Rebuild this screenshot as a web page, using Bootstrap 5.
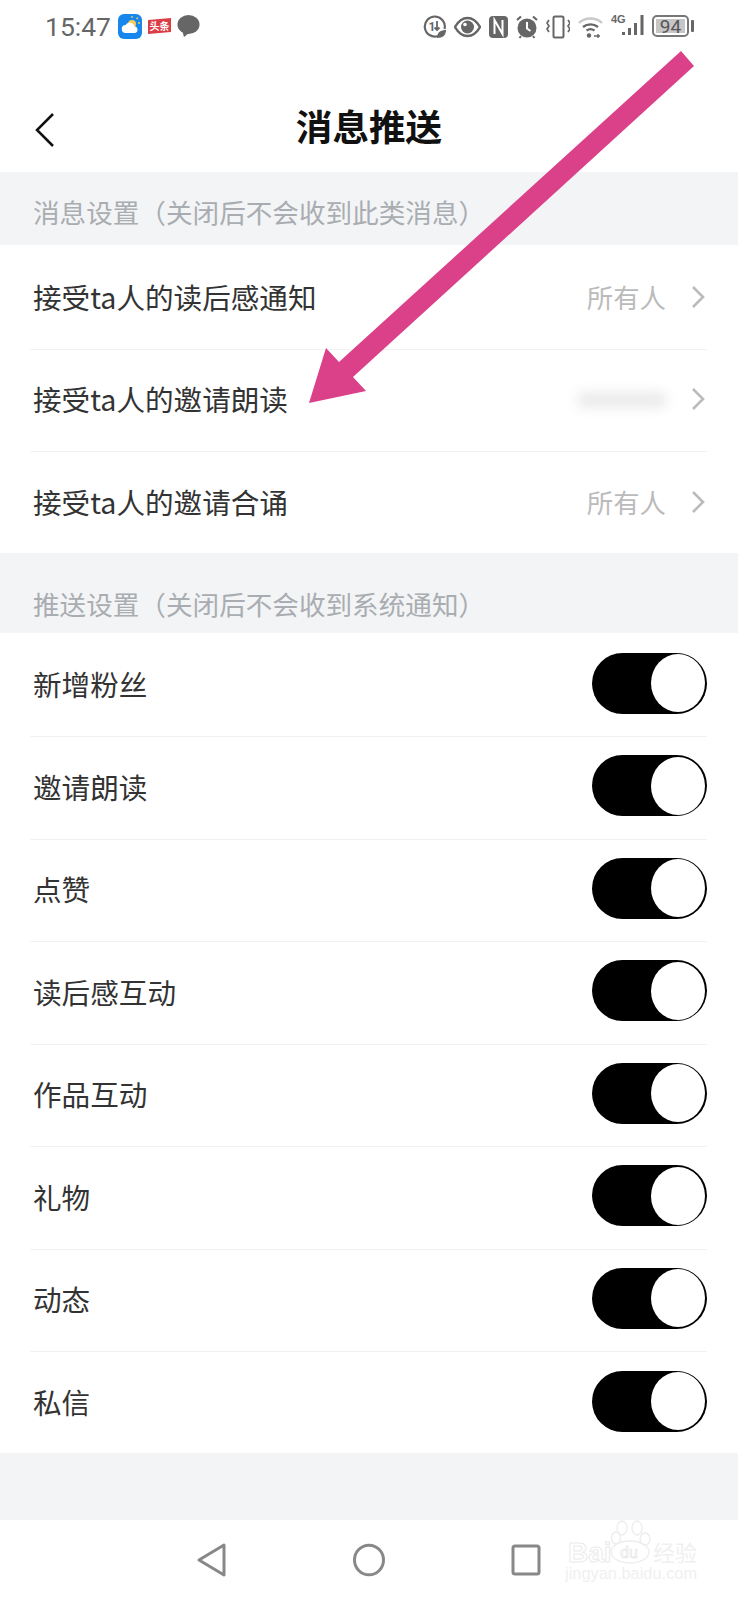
<!DOCTYPE html>
<html lang="zh-CN">
<head>
  <meta charset="UTF-8">
  <meta name="viewport" content="width=device-width, initial-scale=1.0">
  <title>消息推送</title>
  <link href="https://cdn.jsdelivr.net/npm/bootstrap@5.3.0/dist/css/bootstrap.min.css" rel="stylesheet">
  <style>
    body {
      background-color: #fff;
      font-family: "Noto Sans CJK SC", "Noto Sans", sans-serif;
      color: #333;
    }
    .phone-page {
      width: 738px;
      height: 1600px;
      background-color: #f3f4f6;
      overflow: hidden;
    }
    .status-bar {
      height: 55px;
      padding: 14px 44px 0 45px;
      background-color: #fff;
    }
    .status-time {
      font-family: Roboto, sans-serif;
      font-size: 26.5px;
      line-height: 26px;
      color: #666;
      width: 68px;
    }
    .status-left { gap: 5px; }
    .status-right { gap: 8px; margin-top: 1px; }
    .signal-icon { margin-top: -5px; }
    .title-bar {
      height: 117px;
      background-color: #fff;
      padding-top: 26px;
    }
    .title-text {
      font-size: 36.6px;
      font-weight: 700;
      color: #111;
      line-height: 1;
      margin: 0;
    }
    .title-back {
      left: 34px;
      top: 57px;
    }
    .group-label {
      font-size: 26.6px;
      color: #a9adb1;
      padding-left: 33px;
    }
    .label-one { height: 73px; padding-top: 6px; }
    .label-two { height: 80px; padding-top: 23px; }
    .setting-list { background-color: #fff; padding-top: 2px; }
    .setting-row {
      height: 102.5px;
      margin: 0 31px 0 30px;
      padding: 0 3px 4px;
      font-size: 28.6px;
      color: #333;
      border-bottom: 1px solid #f1f2f4;
    }
    .setting-row:last-child {
      height: 100.5px;
      padding-bottom: 2.5px;
      border-bottom: 0;
    }
    .row-name { margin-top: 3px; }
    .row-value { margin-top: 2px; }
    .value-text {
      font-size: 26.4px;
      color: #bbb;
      margin-right: 25px;
    }
    .value-blur {
      width: 88px;
      height: 16px;
      margin-top: 2px;
      margin-right: 25px;
      background-color: #ebebeb;
      filter: blur(6px);
    }
    .chevron-right { margin-right: -1px; }
    .push-toggle {
      width: 115px;
      height: 61px;
      background-color: #000;
      padding-right: 2px;
      margin-right: -3px;
    }
    .toggle-knob {
      width: 54px;
      height: 58px;
      background-color: #fff;
      border-radius: 50%;
    }
    .nav-bar {
      height: 80px;
      background-color: #fff;
      padding-left: 196px;
      gap: 125px;
    }
    .baidu-mark { left: 565px; top: 0; }
    .pink-arrow { left: 0; top: 0; }
  </style>
</head>
<body>
  <div class="phone-page position-relative d-flex flex-column">
    <div class="status-bar d-flex justify-content-between align-items-start">
      <div class="status-left d-flex align-items-start">
        <span class="status-time">15:47</span>
        <svg width="24" height="25" viewBox="0 0 24 25">
          <rect width="24" height="25" rx="6" fill="#1787ee"/>
          <circle cx="14" cy="10" r="4" fill="#f5cf58"/>
          <path d="M14 4v-2M20 9h2M18.500 5l1.500-1.500" stroke="#f5cf58" stroke-width="1.300"/>
          <path d="M8 19a4 4 0 0 1-.5-8 5 5 0 0 1 9 1.500 3.300 3.300 0 0 1 .5 6.500z" fill="#fff"/>
        </svg>
        <svg width="25" height="25" viewBox="0 0 25 25">
          <path d="M1 6 24 4 24 18 1 20z" fill="#dc3c44"/>
          <text x="12.500" y="16" text-anchor="middle" font-size="10" font-weight="700" fill="#fff" font-family="Noto Sans CJK SC">头条</text>
        </svg>
        <svg width="23" height="24" viewBox="0 0 23 24">
          <ellipse cx="11.500" cy="10.500" rx="11" ry="9.500" fill="#666"/>
          <path d="M5 16 7 23 12 19z" fill="#666"/>
        </svg>
      </div>
      <div class="status-right d-flex align-items-start">
        <svg width="23" height="24" viewBox="0 0 23 24">
          <path d="M15 21a10 10 0 1 1 6.500-7" fill="none" stroke="#666" stroke-width="2.200"/>
          <text x="5.500" y="16" font-size="12" font-weight="700" fill="#666" font-family="Roboto">1</text>
          <path d="M14 6v9M11.500 12.500 14 15l2.500-2.500" fill="none" stroke="#666" stroke-width="1.800"/>
          <path d="M14 23c0-6 4-8 9-8 0 5-3 8-9 8z" fill="#666"/>
        </svg>
        <svg width="27" height="24" viewBox="0 0 27 24">
          <path d="M1 12C5 5 9 3 13.500 3S22 5 26 12c-4 7-8 9-12.500 9S5 19 1 12z" fill="none" stroke="#666" stroke-width="2.400"/>
          <circle cx="13.500" cy="12" r="6.500" fill="#666"/>
          <circle cx="11" cy="9.500" r="1.800" fill="#fff"/>
        </svg>
        <svg width="19" height="24" viewBox="0 0 19 24">
          <rect y="1" width="19" height="22" rx="4" fill="#666"/>
          <path d="M5.500 19V5l8 14V5" fill="none" stroke="#fff" stroke-width="2"/>
        </svg>
        <svg width="22" height="24" viewBox="0 0 22 24">
          <circle cx="11" cy="13" r="9.500" fill="#666"/>
          <path d="M11 7v6.500l3.500 2.500" fill="none" stroke="#fff" stroke-width="2"/>
          <path d="M1 5 5 1.500M21 5 17 1.500" stroke="#666" stroke-width="2.200"/>
          <path d="M5 21 3.500 23M17 21l1.500 2" stroke="#666" stroke-width="2"/>
        </svg>
        <svg width="24" height="24" viewBox="0 0 24 24">
          <rect x="7.500" y="1.500" width="10" height="21" rx="1.500" fill="none" stroke="#666" stroke-width="2"/>
          <path d="M3 5 1 8l2 3-2 3 2 3M22 5l2 3-2 3 2 3-2 3" fill="none" stroke="#666" stroke-width="1.700"/>
        </svg>
        <svg width="25" height="24" viewBox="0 0 25 24">
          <path d="M1 8C7 2 18 2 24 8" fill="none" stroke="#c9c9c9" stroke-width="2.400"/>
          <path d="M5 12c4.500-3.500 10.500-3.500 15 0" fill="none" stroke="#666" stroke-width="2.400"/>
          <path d="M8.500 15.500c2.500-1.700 5.500-1.700 8 0" fill="none" stroke="#666" stroke-width="2.200"/>
          <circle cx="11" cy="20.500" r="2.200" fill="#666"/>
          <path d="M16 21h6M20 19v4" stroke="#666" stroke-width="1.400"/>
        </svg>
        <svg class="signal-icon" width="33" height="29" viewBox="0 -5 33 29">
          <text x="0" y="8" font-size="11" font-weight="700" fill="#666" font-family="Liberation Sans">4G</text>
          <rect x="11" y="17" width="3" height="3" fill="#666"/>
          <rect x="17" y="13" width="3" height="7" fill="#666"/>
          <rect x="23" y="8" width="3" height="12" fill="#666"/>
          <rect x="29.500" y="0" width="3" height="20" fill="#666"/>
        </svg>
        <svg width="42" height="24" viewBox="0 0 42 24">
          <rect x="1" y="1" width="35" height="20" rx="4" fill="none" stroke="#777" stroke-width="2"/>
          <rect x="4" y="4" width="29" height="14" fill="#c6c6c6"/>
          <text x="18.500" y="18" text-anchor="middle" font-size="19" fill="#555" font-family="Roboto">94</text>
          <rect x="39" y="5" width="3" height="12" rx="1" fill="#666"/>
        </svg>
      </div>
    </div>

    <div class="title-bar position-relative d-flex justify-content-center align-items-center">
      <svg class="title-back position-absolute" width="22" height="36" viewBox="0 0 22 36">
        <path d="M19 2 3 18l16 16" fill="none" stroke="#111" stroke-width="2.500"/>
      </svg>
      <h1 class="title-text">消息推送</h1>
    </div>

    <div class="group-label label-one d-flex align-items-center">消息设置（关闭后不会收到此类消息）</div>
    <div class="setting-list">
      <div class="setting-row d-flex align-items-center justify-content-between">
        <span class="row-name">接受ta人的读后感通知</span>
        <span class="row-value d-flex align-items-center"><span class="value-text">所有人</span>
          <svg class="chevron-right" width="14" height="24" viewBox="0 0 14 24"><path d="M2 2l10 10L2 22" fill="none" stroke="#bbb" stroke-width="2.600"/></svg></span>
      </div>
      <div class="setting-row d-flex align-items-center justify-content-between">
        <span class="row-name">接受ta人的邀请朗读</span>
        <span class="row-value d-flex align-items-center"><span class="value-blur"></span>
          <svg class="chevron-right" width="14" height="24" viewBox="0 0 14 24"><path d="M2 2l10 10L2 22" fill="none" stroke="#bbb" stroke-width="2.600"/></svg></span>
      </div>
      <div class="setting-row d-flex align-items-center justify-content-between">
        <span class="row-name">接受ta人的邀请合诵</span>
        <span class="row-value d-flex align-items-center"><span class="value-text">所有人</span>
          <svg class="chevron-right" width="14" height="24" viewBox="0 0 14 24"><path d="M2 2l10 10L2 22" fill="none" stroke="#bbb" stroke-width="2.600"/></svg></span>
      </div>
    </div>

    <div class="group-label label-two d-flex align-items-center">推送设置（关闭后不会收到系统通知）</div>
    <div class="setting-list">
      <div class="setting-row d-flex align-items-center justify-content-between"><span class="row-name">新增粉丝</span><span class="push-toggle rounded-pill d-flex align-items-center justify-content-end"><span class="toggle-knob"></span></span></div>
      <div class="setting-row d-flex align-items-center justify-content-between"><span class="row-name">邀请朗读</span><span class="push-toggle rounded-pill d-flex align-items-center justify-content-end"><span class="toggle-knob"></span></span></div>
      <div class="setting-row d-flex align-items-center justify-content-between"><span class="row-name">点赞</span><span class="push-toggle rounded-pill d-flex align-items-center justify-content-end"><span class="toggle-knob"></span></span></div>
      <div class="setting-row d-flex align-items-center justify-content-between"><span class="row-name">读后感互动</span><span class="push-toggle rounded-pill d-flex align-items-center justify-content-end"><span class="toggle-knob"></span></span></div>
      <div class="setting-row d-flex align-items-center justify-content-between"><span class="row-name">作品互动</span><span class="push-toggle rounded-pill d-flex align-items-center justify-content-end"><span class="toggle-knob"></span></span></div>
      <div class="setting-row d-flex align-items-center justify-content-between"><span class="row-name">礼物</span><span class="push-toggle rounded-pill d-flex align-items-center justify-content-end"><span class="toggle-knob"></span></span></div>
      <div class="setting-row d-flex align-items-center justify-content-between"><span class="row-name">动态</span><span class="push-toggle rounded-pill d-flex align-items-center justify-content-end"><span class="toggle-knob"></span></span></div>
      <div class="setting-row d-flex align-items-center justify-content-between"><span class="row-name">私信</span><span class="push-toggle rounded-pill d-flex align-items-center justify-content-end"><span class="toggle-knob"></span></span></div>
    </div>

    <div class="flex-grow-1"></div>

    <div class="nav-bar position-relative d-flex align-items-center">
      <svg width="31" height="36" viewBox="0 0 31 36"><path d="M28 3 3 18l25 15z" fill="none" stroke="#888" stroke-width="3" stroke-linejoin="round"/></svg>
      <svg width="34" height="36" viewBox="0 0 34 36"><ellipse cx="17" cy="18" rx="14.500" ry="14.800" fill="none" stroke="#888" stroke-width="3"/></svg>
      <svg width="30" height="32" viewBox="0 0 30 32"><rect x="2" y="2" width="26" height="28" rx="2" fill="none" stroke="#888" stroke-width="3"/></svg>
      <svg class="baidu-mark position-absolute" width="134" height="66" viewBox="0 0 134 66">
        <g fill="none" stroke="#ededed" stroke-width="1.300">
          <ellipse cx="57" cy="8" rx="5" ry="7"/>
          <ellipse cx="72" cy="8" rx="5" ry="7"/>
          <ellipse cx="51" cy="18" rx="4.500" ry="6"/>
          <ellipse cx="80" cy="19" rx="5" ry="6"/>
          <ellipse cx="65" cy="32" rx="19" ry="11"/>
        </g>
        <text x="3" y="42" font-size="28" font-weight="700" fill="#fff" stroke="#ebebeb" stroke-width="1" font-family="Liberation Sans">Bai</text>
        <text x="55" y="38" font-size="16" fill="#fff" stroke="#e6e6e6" stroke-width=".7" font-family="Liberation Sans">du</text>
        <text x="88" y="41" font-size="22" fill="#f0f0f0" font-family="Noto Sans CJK SC">经验</text>
        <text x="0" y="59" font-size="16.400" fill="#f0f0f0" font-family="Liberation Sans">jingyan.baidu.com</text>
      </svg>
    </div>

    <svg class="pink-arrow position-absolute" width="738" height="1600" viewBox="0 0 738 1600">
      <polygon points="681,51 694,66 353,377 366,391 309,403 326,348 339,362" fill="#db4189"/>
    </svg>
  </div>
  <script src="https://cdn.jsdelivr.net/npm/bootstrap@5.3.0/dist/js/bootstrap.bundle.min.js"></script>
</body>
</html>
